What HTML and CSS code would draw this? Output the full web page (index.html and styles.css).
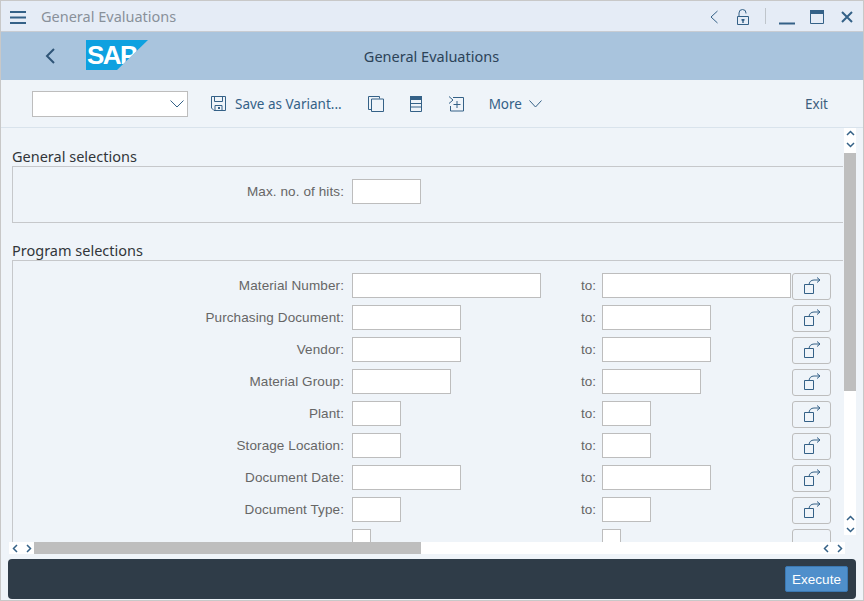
FILE: index.html
```html
<!DOCTYPE html>
<html lang="en">
<head>
<meta charset="utf-8">
<title>General Evaluations</title>
<link rel="stylesheet" href="styles.css">
</head>
<body>
<div class="window">
  <header class="titlebar">
    <svg class="ico menu" width="18" height="14" viewBox="0 0 18 14"><path d="M1 2h16M1 7.500h16M1 13h16"/></svg>
    <span class="wintitle">General Evaluations</span>
    <span class="spacer"></span>
    <svg class="ico" width="12" height="16" viewBox="0 0 12 16"><path class="thin" d="M9.500 2 3 8l6.500 6"/></svg>
    <svg class="ico lock" width="14" height="18" viewBox="0 0 14 18"><path class="thin" d="M1.500 8.500h11v8h-11zM3 8.500V5a3.500 3.500 0 0 1 7 0v.5"/><path class="fill" d="M5.500 11h3v1.500l-.8.500v2H6.300v-2l-.8-.5z"/></svg>
    <span class="divider"></span>
    <svg class="ico minim" width="16" height="16" viewBox="0 0 16 16"><path d="M0 14.500h16"/></svg>
    <svg class="ico maxim" width="14" height="14" viewBox="0 0 14 14"><path class="thin" d="M.5.500h13v13H.5z"/><path class="fill" d="M0 0h14v4H0z"/></svg>
    <svg class="ico close" width="12" height="12" viewBox="0 0 12 12"><path d="M1 1l10 10M11 1 1 11"/></svg>
  </header>
  <div class="appbar">
    <svg class="ico back" width="12" height="18" viewBox="0 0 12 18"><path d="M10 2 3 9l7 7"/></svg>
    <div class="logo"><span class="logotext">SAP</span></div>
    <h1 class="apptitle">General Evaluations</h1>
  </div>
  <div class="toolbar">
    <div class="combo"><svg class="ico" width="14" height="8" viewBox="0 0 14 8"><path class="thin" d="M.5.500 7 7 13.500.500"/></svg></div>
    <button class="tool save">
      <svg class="ico" width="15" height="15" viewBox="0 0 15 15"><path class="thin" d="M.5.500h14v14H3L.5 12zM3.500.500v5h8v-5M4 14.500v-5h7v5"/><path class="fill" d="M7 11h2v2H7z"/></svg>
      <span>Save as Variant...</span>
    </button>
    <button class="tool icon first"><svg class="ico" width="16" height="16" viewBox="0 0 16 16"><path class="thin" d="M3.500 13.500H.5V.5h11v2"/><path class="thin" d="M3.500 3h12v12.500h-12z"/></svg></button>
    <button class="tool icon"><svg class="ico" width="12" height="16" viewBox="0 0 12 16"><path class="thin" d="M.5.500h11v15H.5zM.5 7.500h11M.5 11h11"/><path class="fill" d="M0 0h12v4H0z"/></svg></button>
    <button class="tool icon"><svg class="ico" width="16" height="16" viewBox="0 0 16 16"><path class="thin" d="M1 .5 5 4 1 7.500M5 1.500h10.500v13.500H2.500v-5M9 5v7M5.500 8.500h7"/></svg></button>
    <button class="tool more"><span>More</span><svg class="ico" width="13" height="8" viewBox="0 0 13 8"><path class="thin" d="M.5.500 6.500 7l6-6.500"/></svg></button>
    <span class="spacer"></span>
    <button class="tool exit">Exit</button>
  </div>
  <main class="content">
    <div class="scroller">
      <section class="group general">
        <h2 class="grouptitle">General selections</h2>
        <div class="groupbox">
          <div class="row">
            <label class="lbl">Max. no. of hits:</label>
            <span class="field w69"></span>
          </div>
        </div>
      </section>
      <section class="group program">
        <h2 class="grouptitle">Program selections</h2>
        <div class="groupbox">
          <div class="row"><label class="lbl">Material Number:</label><div class="from"><span class="field w189"></span></div><span class="to">to:</span><div class="until"><span class="field w189"></span></div><button class="multi"><svg class="ico" width="24" height="18" viewBox="0 0 24 18"><path class="thin" d="M4.500 7.500h9v9h-9zM9 8c0-3 2-5 5-5h6M17 .5 20 3l-3 2.500"/></svg></button></div>
          <div class="row"><label class="lbl">Purchasing Document:</label><div class="from"><span class="field w109"></span></div><span class="to">to:</span><div class="until"><span class="field w109"></span></div><button class="multi"><svg class="ico" width="24" height="18" viewBox="0 0 24 18"><path class="thin" d="M4.500 7.500h9v9h-9zM9 8c0-3 2-5 5-5h6M17 .5 20 3l-3 2.500"/></svg></button></div>
          <div class="row"><label class="lbl">Vendor:</label><div class="from"><span class="field w109"></span></div><span class="to">to:</span><div class="until"><span class="field w109"></span></div><button class="multi"><svg class="ico" width="24" height="18" viewBox="0 0 24 18"><path class="thin" d="M4.500 7.500h9v9h-9zM9 8c0-3 2-5 5-5h6M17 .5 20 3l-3 2.500"/></svg></button></div>
          <div class="row"><label class="lbl">Material Group:</label><div class="from"><span class="field w99"></span></div><span class="to">to:</span><div class="until"><span class="field w99"></span></div><button class="multi"><svg class="ico" width="24" height="18" viewBox="0 0 24 18"><path class="thin" d="M4.500 7.500h9v9h-9zM9 8c0-3 2-5 5-5h6M17 .5 20 3l-3 2.500"/></svg></button></div>
          <div class="row"><label class="lbl">Plant:</label><div class="from"><span class="field w49"></span></div><span class="to">to:</span><div class="until"><span class="field w49"></span></div><button class="multi"><svg class="ico" width="24" height="18" viewBox="0 0 24 18"><path class="thin" d="M4.500 7.500h9v9h-9zM9 8c0-3 2-5 5-5h6M17 .5 20 3l-3 2.500"/></svg></button></div>
          <div class="row"><label class="lbl">Storage Location:</label><div class="from"><span class="field w49"></span></div><span class="to">to:</span><div class="until"><span class="field w49"></span></div><button class="multi"><svg class="ico" width="24" height="18" viewBox="0 0 24 18"><path class="thin" d="M4.500 7.500h9v9h-9zM9 8c0-3 2-5 5-5h6M17 .5 20 3l-3 2.500"/></svg></button></div>
          <div class="row"><label class="lbl">Document Date:</label><div class="from"><span class="field w109"></span></div><span class="to">to:</span><div class="until"><span class="field w109"></span></div><button class="multi"><svg class="ico" width="24" height="18" viewBox="0 0 24 18"><path class="thin" d="M4.500 7.500h9v9h-9zM9 8c0-3 2-5 5-5h6M17 .5 20 3l-3 2.500"/></svg></button></div>
          <div class="row"><label class="lbl">Document Type:</label><div class="from"><span class="field w49"></span></div><span class="to">to:</span><div class="until"><span class="field w49"></span></div><button class="multi"><svg class="ico" width="24" height="18" viewBox="0 0 24 18"><path class="thin" d="M4.500 7.500h9v9h-9zM9 8c0-3 2-5 5-5h6M17 .5 20 3l-3 2.500"/></svg></button></div>
          <div class="row"><label class="lbl"></label><div class="from"><span class="field w19"></span></div><span class="to"></span><div class="until"><span class="field w19"></span></div><button class="multi"></button></div>
        </div>
      </section>
    </div>
    <div class="vscroll">
      <div class="arrows v">
        <svg class="ico" width="9" height="6" viewBox="0 0 9 6"><path class="arrow" d="M1 5 4.500 1.500 8 5"/></svg>
        <svg class="ico" width="9" height="6" viewBox="0 0 9 6"><path class="arrow" d="M1 1 4.500 4.500 8 1"/></svg>
      </div>
      <div class="vtrack"><div class="vthumb"></div></div>
      <div class="arrows v end">
        <svg class="ico" width="9" height="6" viewBox="0 0 9 6"><path class="arrow" d="M1 5 4.500 1.500 8 5"/></svg>
        <svg class="ico" width="9" height="6" viewBox="0 0 9 6"><path class="arrow" d="M1 1 4.500 4.500 8 1"/></svg>
      </div>
    </div>
    <div class="hscroll">
      <div class="arrows h">
        <svg class="ico" width="6" height="9" viewBox="0 0 6 9"><path class="arrow" d="M5 1 1.500 4.500 5 8"/></svg>
        <svg class="ico" width="6" height="9" viewBox="0 0 6 9"><path class="arrow" d="M1 1 4.500 4.500 1 8"/></svg>
      </div>
      <div class="htrack"><div class="hthumb"></div></div>
      <div class="arrows h">
        <svg class="ico" width="6" height="9" viewBox="0 0 6 9"><path class="arrow" d="M5 1 1.500 4.500 5 8"/></svg>
        <svg class="ico" width="6" height="9" viewBox="0 0 6 9"><path class="arrow" d="M1 1 4.500 4.500 1 8"/></svg>
      </div>
    </div>
  </main>
  <footer class="footerwrap">
    <div class="footer"><button class="execute">Execute</button></div>
  </footer>
</div>
</body>
</html>
```
FILE: styles.css
```css
* { box-sizing: border-box; }
html, body { margin: 0; padding: 0; }
body { width: 864px; height: 601px; overflow: hidden; background: #eff4f9; font-family: "Noto Sans", "Open Sans", sans-serif; }
.window { width: 864px; height: 601px; display: flex; flex-direction: column; border: 1px solid #c8c8c8; background: #eff4f9; }
button { font: inherit; background: none; border: 0; padding: 0; color: inherit; }
h1, h2 { margin: 0; font-weight: 400; }
.spacer { flex: 1; }

.ico { display: block; flex: none; fill: none; stroke: #346187; stroke-width: 2; }
.ico .thin { stroke-width: 1; }
.ico .fill { fill: #346187; stroke: none; }
.ico .arrow { stroke: #346187; stroke-width: 1.500; }

.titlebar { height: 31px; flex: none; display: flex; align-items: center; background: #e5ecf6; border-bottom: 1px solid #c8ccd2; padding: 0 10px 0 8px; }
.wintitle { margin-left: 14px; font-size: 14.500px; color: #89919a; }
.titlebar .ico { margin-top: 1px; }
.lock { margin-left: 16px; }
.divider { width: 1px; height: 16px; background: #bfc5cb; margin-left: 15px; margin-right: 13px; }
.maxim { margin-left: 15px; }
.close { margin-left: 17px; }
.minim { margin-top: 0; }

.appbar { height: 48px; flex: none; position: relative; display: flex; align-items: center; justify-content: center; background: #a9c4dd; }
.back { position: absolute; left: 43px; top: 15px; stroke: #2f5577; }
.logo { position: absolute; left: 85px; top: 8px; width: 62px; height: 30px; background: #0ea1e0; clip-path: polygon(0 0, 100% 0, 50% 100%, 0 100%); }
.logotext { display: block; font-family: "Liberation Sans", sans-serif; font-weight: 700; font-size: 26px; line-height: 30px; letter-spacing: -1.500px; color: #fff; padding-left: 1px; }
.apptitle { font-size: 14.500px; color: #2c4358; margin-right: 1px; }

.toolbar { height: 48px; flex: none; display: flex; align-items: center; background: #eff4f9; border-bottom: 1px solid #d9e3ec; padding: 0 35px 0 31px; }
.combo { width: 156px; height: 26px; background: #fff; border: 1px solid #bdbdbd; display: flex; align-items: center; justify-content: flex-end; padding-right: 3px; }
.tool { display: flex; align-items: center; font-size: 13.500px; color: #346187; }
.save { margin-left: 23px; }
.save span { margin-left: 9px; }
.icon { margin-left: 26px; }
.first { margin-left: 26px; }
.more { margin-left: 25px; }
.more span { margin-right: 7px; }
.exit { color: #3d5f7d; }

.content { position: relative; flex: 1; min-height: 0; overflow: hidden; }
.scroller { padding: 0 0 0 11px; height: 100%; overflow: hidden; }
.group { width: 831px; }
.general { padding-top: 18px; }
.program { padding-top: 17px; }
.grouptitle { font-size: 14.500px; line-height: 20px; color: #32363a; }
.groupbox { border: 1px solid #c6c8cb; border-right: 0; }
.general .groupbox { height: 57px; padding-top: 12px; }
.program .groupbox { padding-top: 12px; height: 400px; }
.row { height: 32px; display: flex; align-items: flex-start; }
.lbl { width: 331px; height: 25px; line-height: 25px; text-align: right; font-family: "Liberation Sans", sans-serif; font-size: 13.500px; letter-spacing: .1px; color: #666; }
.field { display: block; height: 25px; background: #fff; border: 1px solid #bdbdbd; }
.from { width: 229px; margin-left: 8px; }
.to { width: 21px; height: 25px; line-height: 25px; font-family: "Liberation Sans", sans-serif; font-size: 13.500px; color: #666; }
.until { width: 190px; }
.w189 { width: 189px; }
.w109 { width: 109px; }
.w99 { width: 99px; }
.w69 { width: 69px; margin-left: 8px; }
.w49 { width: 49px; }
.w19 { width: 19px; }
.multi { width: 39px; height: 27px; background: #eff4f9; border: 1px solid #bdbdbd; border-radius: 3px; display: flex; align-items: center; justify-content: center; }
.multi .ico { margin-top: -1px; }

.vscroll { position: absolute; right: 7px; top: 0; width: 12px; height: 407px; display: flex; flex-direction: column; background: #fff; }
.vtrack { flex: 1; background: #fff; }
.vthumb { height: 238px; background: #bebebe; }
.arrows { display: flex; background: #fff; flex: none; }
.arrows.v { flex-direction: column; align-items: center; gap: 6px; padding: 2px 0 3px; height: 25px; }
.vscroll .end { height: 20px; padding: 0; }
.hscroll { position: absolute; left: 8px; bottom: 0; width: 836px; height: 12px; display: flex; background: #fff; }
.arrows.h { align-items: center; gap: 8px; padding: 0 3px; width: 25px; }
.htrack { flex: 1; }
.hthumb { width: 387px; height: 12px; background: #bebebe; }

.footerwrap { flex: none; height: 46px; padding: 5px 7px 6px; background: #eff4f9; }
.footer { height: 40px; background: #2f3c48; border-radius: 4px; display: flex; align-items: center; justify-content: flex-end; padding-right: 8px; }
.execute { width: 63px; height: 26px; background: #4f8fcb; border: 1px solid #3b78b2; border-radius: 2px; color: #fff; font-family: "Liberation Sans", sans-serif; font-size: 13.500px; }
```
